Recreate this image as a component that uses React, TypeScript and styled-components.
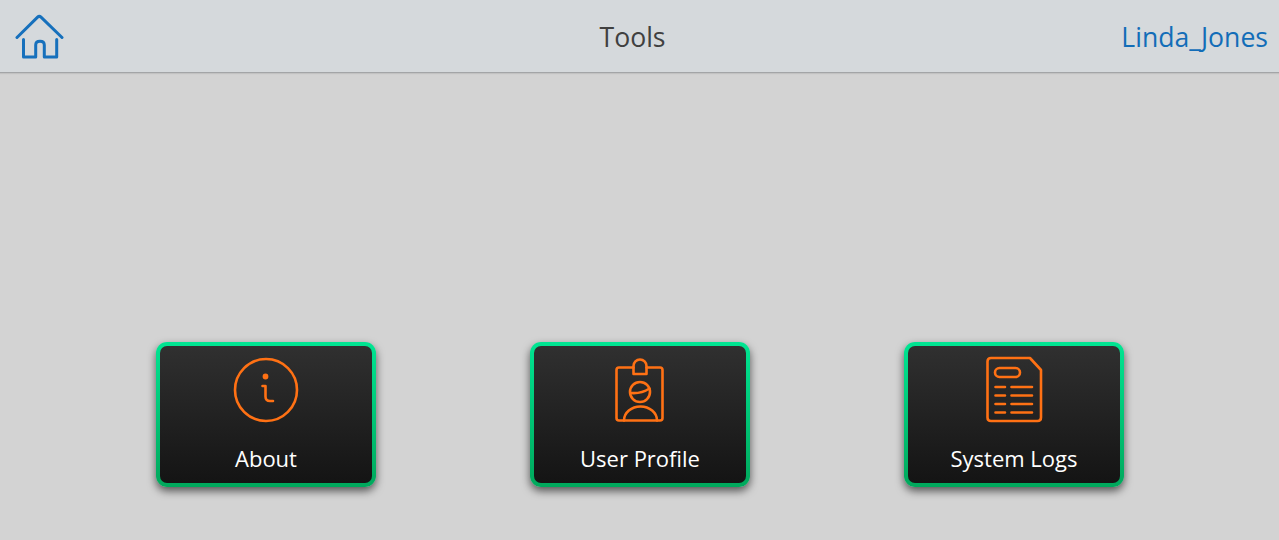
import React from "react";
import styled, { createGlobalStyle } from "styled-components";

const GlobalStyle = createGlobalStyle`
  html, body {
    margin: 0;
    padding: 0;
    height: 100%;
    background: #d3d3d3;
    font-family: "Open Sans", "Noto Sans", sans-serif;
  }
  #root {
    height: 100%;
  }
`;

const Page = styled.div`
  width: 100%;
  height: 540px;
  display: flex;
  flex-direction: column;
  overflow: hidden;
  background: #d3d3d3;
`;

const Header = styled.header`
  box-sizing: border-box;
  height: 73px;
  flex: none;
  display: grid;
  grid-template-columns: 1fr auto 1fr;
  align-items: center;
  padding: 0 11px 0 15px;
  background: #d5d9dc;
  border-bottom: 1px solid #a3a5a7;
  box-shadow: 0 1px 1px rgba(0, 0, 0, 0.08);
`;

const HomeButton = styled.div`
  width: 50px;
  height: 50px;
  display: flex;
`;

const Title = styled.div`
  font-size: 26.6px;
  line-height: 34px;
  padding-top: 2px;
  color: #404040;
  margin-right: 18px;
`;

const UserName = styled.div`
  font-size: 26.6px;
  line-height: 34px;
  padding-top: 2px;
  color: #126db8;
  text-align: right;
`;

const Main = styled.main`
  flex: 1;
  display: flex;
  justify-content: center;
  align-items: flex-start;
  gap: 154px;
  padding: 269px 0 0 1px;
`;

const Card = styled.div`
  box-sizing: border-box;
  width: 220px;
  height: 145px;
  border: 4px solid transparent;
  border-radius: 11px;
  padding-top: 4px;
  display: flex;
  flex-direction: column;
  align-items: center;
  background:
    linear-gradient(#303030, #141414) padding-box,
    linear-gradient(#00e592, #00a85c) border-box;
  box-shadow: 0 4px 8px rgba(0, 0, 0, 0.6);
`;

const IconBox = styled.svg`
  width: 80px;
  height: 80px;
  flex: none;
  fill: none;
  stroke: #ff7114;
  stroke-width: 2.6;
  stroke-linecap: round;
  stroke-linejoin: round;
`;

const Label = styled.div`
  margin-top: 13px;
  font-size: 22px;
  line-height: 30px;
  color: #ffffff;
`;

const HomeIcon = () => (
  <svg width="50" height="50" viewBox="15 10.5 50 50" fill="none" stroke="#1670bc" strokeWidth="3" strokeLinecap="round" strokeLinejoin="round">
    <path d="M17 37 L37.6 16.6 Q39.3 15 41 16.6 L62 37" />
    <path d="M23.5 39 V56.5 H35.7 V44.5 Q35.7 40.7 40 40.7 Q44.3 40.7 44.3 44.5 V56.5 H56.7 V39" />
  </svg>
);

const InfoIcon = () => (
  <IconBox viewBox="0 0 80 80">
    <circle cx="40" cy="40" r="31" />
    <circle cx="39.5" cy="26.5" r="1.6" fill="#ff7114" />
    <path d="M36.5 36 H39.5 V46.5 Q39.5 51 44 51 H47" />
  </IconBox>
);

const ProfileIcon = () => (
  <IconBox viewBox="0 0 80 80">
    <path d="M33.5 17.5 H19 Q16.5 17.5 16.5 20 V68 Q16.5 70.5 19 70.5 H60 Q62.5 70.5 62.5 68 V20 Q62.5 17.5 60 17.5 H46.5" />
    <path d="M33.5 24 V16 A6.5 6.5 0 0 1 46.5 16 V24 Z" />
    <circle cx="40" cy="42" r="10" />
    <path d="M30.5 43 Q41 44 49.5 38.5" />
    <path d="M24 70.5 A16.5 14 0 0 1 57 70.5" />
  </IconBox>
);

const LogsIcon = () => (
  <IconBox viewBox="0 0 80 80">
    <path d="M56 8 H17 Q13.5 8 13.5 11.5 V67.5 Q13.5 71 17 71 H63.5 Q67 71 67 67.5 V20 Z" />
    <rect x="21" y="18" width="25" height="9" rx="4.5" />
    <path d="M21.5 37 H31 M37.5 37 H58 M21.5 45.5 H31 M37.5 45.5 H58 M21.5 54 H31 M37.5 54 H58 M21.5 62.5 H31 M37.5 62.5 H58" />
  </IconBox>
);

const tools = [
  { name: "About", icon: <InfoIcon /> },
  { name: "User Profile", icon: <ProfileIcon /> },
  { name: "System Logs", icon: <LogsIcon /> }
];

export default function App() {
  return (
    <Page>
      <GlobalStyle />
      <Header>
        <HomeButton>
          <HomeIcon />
        </HomeButton>
        <Title>Tools</Title>
        <UserName>Linda_Jones</UserName>
      </Header>
      <Main>
        {tools.map(tool => (
          <Card key={tool.name}>
            {tool.icon}
            <Label>{tool.name}</Label>
          </Card>
        ))}
      </Main>
    </Page>
  );
}
